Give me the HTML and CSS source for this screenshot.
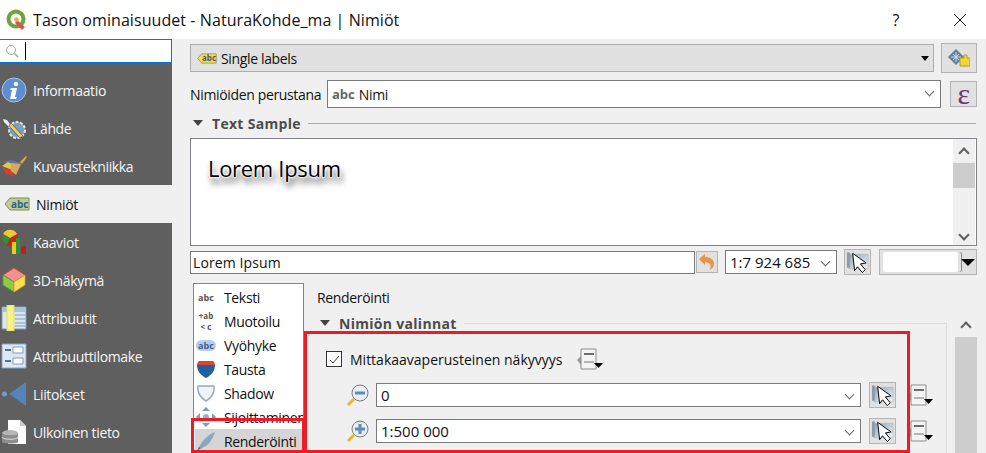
FILE: index.html
```html
<!DOCTYPE html>
<html lang="en">

<head>
    <meta charset="UTF-8">
    <title>Tason ominaisuudet</title>
    <link rel="stylesheet" href="styles.css">
</head>

<body>
    <svg class="defs" width="0" height="0">
        <defs>
            <linearGradient id="mapfill" x1="0" y1="0" x2="1" y2="1">
                <stop offset="0" stop-color="#8fa3b5"/>
                <stop offset="1" stop-color="#f2f5f7"/>
            </linearGradient>
        </defs>
        <symbol id="pick" viewBox="0 0 26 26">
            <path d="M4 5h20v15H4z" fill="url(#mapfill)" stroke="#a5afb7" stroke-width=".6"/>
            <path d="M2 3h3v16H2z" fill="#8f9ba6"/>
            <path d="M8 4l14 10-6 1 5 6-3 3-5-6-3 4z" fill="#fff" stroke="#000"/>
        </symbol>
        <symbol id="dd" viewBox="0 0 28 24">
            <path d="M1 13l4-4v9z" fill="#9a9a9a"/>
            <path d="M5 2h15v20H5z" fill="#f4f4f4" stroke="#8c8c8c"/>
            <path d="M8 6h10v2H8z" fill="#6d6d6d"/>
            <path d="M8 14h10v2H8z" fill="#b5b5b5"/>
            <path d="M18 16h9l-4.500 5z" fill="#000"/>
        </symbol>
        <symbol id="abc" viewBox="0 0 26 14">
            <path d="M6 1h19v12H6L1 7z" fill="currentColor" stroke="#8a8a4a"/>
        </symbol>
    </svg>

    <div class="titlebar">
        <svg class="qgis" width="21" height="21" viewBox="0 0 21 21">
            <circle cx="10" cy="10" r="7.500" fill="none" stroke="#6ea33d" stroke-width="4"/>
            <path d="M11 11l8 7-3 3-7-7z" fill="#d9534f"/>
            <circle cx="10.500" cy="10.500" r="2.300" fill="#e8b23a"/>
        </svg>
        <span class="title">Tason ominaisuudet - NaturaKohde_ma | Nimiöt</span>
        <span class="help">?</span>
        <svg class="close" width="14" height="14" viewBox="0 0 14 14">
            <path d="M1 1l12 12M13 1L1 13" stroke="#111" fill="none"/>
        </svg>
    </div>

    <div class="dialog">
        <div class="sidebar">
            <div class="search">
                <svg width="14" height="14" viewBox="0 0 14 14">
                    <circle cx="6" cy="6" r="4.500" fill="none" stroke="#a5a5a5"/>
                    <path d="M9.500 9.500l3.500 3.500" stroke="#a5a5a5" stroke-width="1.500"/>
                </svg>
                <span class="caret"></span>
            </div>
            <ul class="menu">
                <li>
                    <svg width="26" height="26" viewBox="0 0 26 26">
                        <circle cx="13" cy="13" r="12" fill="#5c8fd0" stroke="#a9c4e6"/>
                        <circle cx="15" cy="7" r="2.300" fill="#fff"/>
                        <path d="M10 11h6l-2 9h2l-1 2H9l2-9H9z" fill="#fff"/>
                    </svg>
                    Informaatio
                </li>
                <li>
                    <svg width="26" height="26" viewBox="0 0 26 26">
                        <circle cx="16" cy="15" r="8" fill="#7f9fb8" stroke="#e6e6e6" stroke-width="2" stroke-dasharray="3 1.500"/>
                        <path d="M2 4l4 1 3 4 3 2-2 2-3-2-4-4z" fill="#eee"/>
                        <path d="M10 8l12 13-3 2L8 11z" fill="#e8cf73" stroke="#333" stroke-width=".6"/>
                    </svg>
                    Lähde
                </li>
                <li>
                    <svg width="26" height="26" viewBox="0 0 26 26">
                        <path d="M19 9l6-6 1 1-5 7z" fill="#e0a93f"/>
                        <path d="M2 9l8-2 10 3-4 7z" fill="#5577b0"/>
                        <path d="M1 13l6-4 6 3-2 5z" fill="#e6c53f"/>
                        <path d="M1 14l9 3 3 7-8-3z" fill="#d2402f"/>
                        <path d="M10 10l10 1-5 11-5-4z" fill="#d9a860"/>
                    </svg>
                    Kuvaustekniikka
                </li>
                <li class="active">
                    <span class="abc-tag">
                        <svg width="26" height="14"><use href="#abc"/></svg>
                        <b>abc</b>
                    </span>
                    Nimiöt
                </li>
                <li>
                    <svg width="26" height="26" viewBox="0 0 26 26">
                        <circle cx="9" cy="9" r="8" fill="#c0281c"/>
                        <path d="M2 5a8 8 0 0 1 14 0L9 9z" fill="#e9c93a"/>
                        <path d="M1 9a8 8 0 0 0 5 7l3-7-7-4z" fill="#2f8f3a"/>
                        <path d="M11 13h4v12h-4z" fill="#f2c81e"/>
                        <path d="M15 9h4v16h-4z" fill="#2f8f3a"/>
                        <path d="M20 17h5v8h-5z" fill="#b3261a"/>
                    </svg>
                    Kaaviot
                </li>
                <li>
                    <svg width="26" height="26" viewBox="0 0 26 26">
                        <path d="M13 1l11 7-11 7L2 8z" fill="#f48f8f" stroke="#c43" stroke-width=".8"/>
                        <path d="M2 8l11 7v10L2 18z" fill="#8ccb45" stroke="#5c9a2a" stroke-width=".8"/>
                        <path d="M24 8l-11 7v10l11-7z" fill="#f6df59" stroke="#c9a92e" stroke-width=".8"/>
                    </svg>
                    3D-näkymä
                </li>
                <li>
                    <svg width="26" height="26" viewBox="0 0 26 26">
                        <path d="M1 2h24v22H1z" fill="#dbe6f2" stroke="#7b9cc2"/>
                        <path d="M2 3h23v4H2z" fill="#a9c3df"/>
                        <path d="M14 10h10M14 14h10M14 18h10M14 21h10" stroke="#7f9dc0"/>
                        <path d="M6 0h7v26H6z" fill="#f6f28a" stroke="#e9e04a"/>
                    </svg>
                    Attribuutit
                </li>
                <li>
                    <svg width="26" height="26" viewBox="0 0 26 26">
                        <path d="M1 1h24v24H1z" fill="#dfe8f2" stroke="#86a4c6"/>
                        <path d="M12 4h10v6H12zM12 15h10v6H12z" fill="#fff" stroke="#7b9cc2"/>
                        <path d="M4 7h6M4 18h6" stroke="#52708f" stroke-width="2"/>
                    </svg>
                    Attribuuttilomake
                </li>
                <li>
                    <svg width="26" height="26" viewBox="0 0 26 26">
                        <circle cx="3.500" cy="13" r="2.500" fill="#6f9dca"/>
                        <path d="M8 13L25 1v24z" fill="#5585b8"/>
                    </svg>
                    Liitokset
                </li>
                <li>
                    <svg width="26" height="26" viewBox="0 0 26 26">
                        <path d="M7 1h12l6 6v18H7z" fill="#fff"/>
                        <path d="M19 1v6h6z" fill="#c9c9c9"/>
                        <ellipse cx="9" cy="14" rx="8" ry="3" fill="#b5b5b5"/>
                        <path d="M1 14v9c0 2 16 2 16 0v-9c0 3-16 3-16 0z" fill="#8c8c8c"/>
                        <path d="M1 18c0 3 16 3 16 0" stroke="#ddd" fill="none"/>
                    </svg>
                    Ulkoinen tieto
                </li>
            </ul>
        </div>

        <div class="main">
            <div class="row-mode">
                <div class="mode-select">
                    <span class="abc-tag yellow">
                        <svg width="20" height="11" viewBox="0 0 26 14"><use href="#abc"/></svg>
                        <b>abc</b>
                    </span>
                    Single labels
                    <span class="arrow"></span>
                </div>
                <div class="tool-btn mode-btn">
                    <svg width="22" height="18" viewBox="0 0 22 18">
                        <path d="M8 0l8 8-8 8-8-8z" fill="#5d7f98"/>
                        <path d="M8 3v10M3 8h10M5 5l6 6M11 5l-6 6" stroke="#cfdde6"/>
                        <path d="M12 9h4V6h3v3h3v8H12z" fill="#f1d53a" stroke="#b89d1a"/>
                    </svg>
                </div>
            </div>

            <div class="row-field">
                <label>Nimiöiden perustana</label>
                <div class="combo field-combo"><b class="abc-gray">abc</b> Nimi<span class="chev"></span></div>
                <div class="tool-btn eps">ε</div>
            </div>

            <div class="group-head text-sample">
                <span class="tri"></span><b>Text Sample</b><span class="rule"></span>
            </div>

            <div class="preview">
                <div class="lorem">Lorem Ipsum</div>
                <div class="scroll preview-scroll"><span class="up"></span><span class="thumb"></span><span class="down"></span></div>
            </div>

            <div class="row-sample">
                <div class="sample-input">Lorem Ipsum</div>
                <div class="tool-btn undo">
                    <svg width="18" height="18" viewBox="0 0 18 18">
                        <path d="M1 6l6-5v3c6 0 9 3 9 7 0 3-2 5-5 6 2-2 2-4 1-6-1-1-3-2-5-2v3z" fill="#e8924a"/>
                    </svg>
                </div>
                <div class="combo scale-combo">1:7 924 685<span class="chev"></span></div>
                <div class="tool-btn pick-btn"><svg width="26" height="26"><use href="#pick"/></svg></div>
                <div class="color-btn"><span class="swatch"></span><span class="arrow big"></span></div>
            </div>

            <div class="lower">
                <ul class="tabs">
                    <li><span class="tab-icon small-abc">abc</span>Teksti</li>
                    <li><span class="tab-icon small-fmt">+ab<br>&lt; c</span>Muotoilu</li>
                    <li><span class="tab-icon small-buf">abc</span>Vyöhyke</li>
                    <li>
                        <svg class="tab-icon" width="20" height="18" viewBox="0 0 20 18">
                            <path d="M1 5c0-2 1-3 2-4h14c1 1 2 2 2 4z" fill="#d9443a"/>
                            <path d="M1 5h18c0 7-5 11-9 13C6 16 1 12 1 5z" fill="#1f5f9c"/>
                        </svg>Tausta
                    </li>
                    <li>
                        <svg class="tab-icon" width="20" height="18" viewBox="0 0 20 18">
                            <path d="M2 2h16c1 8-4 13-8 15C6 15 1 10 2 2z" fill="#eef2fb" stroke="#9aa7c4" stroke-width="1.500"/>
                        </svg>Shadow
                    </li>
                    <li>
                        <svg class="tab-icon" width="20" height="20" viewBox="0 0 20 20">
                            <path d="M10 0l4 4h-8zM10 20l-4-4h8zM0 10l4-4v8zM20 10l-4 4V6z" fill="#7f9cb8"/>
                            <circle cx="10" cy="10" r="3" fill="#9ab2c8"/>
                        </svg>Sijoittaminen
                    </li>
                    <li class="selected">
                        <svg class="tab-icon" width="20" height="20" viewBox="0 0 20 20">
                            <path d="M2 19C4 12 11 4 19 1c-2 7-7 14-13 16z" fill="#8ba7bd"/>
                            <path d="M1 20l4-3-2-1z" fill="#52687a"/>
                        </svg>Renderöinti
                    </li>
                </ul>

                <div class="panel">
                    <div class="panel-title">Renderöinti</div>
                    <div class="group-head options-head">
                        <span class="tri"></span><b>Nimiön valinnat</b><span class="rule"></span>
                    </div>
                    <div class="options">
                        <div class="check-row">
                            <span class="check">
                                <svg width="11" height="9" viewBox="0 0 11 9"><path d="M1 5l3 3 6-7" fill="none" stroke="#333"/></svg>
                            </span>
                            Mittakaavaperusteinen näkyvyys
                            <svg class="dd-icon" width="28" height="24"><use href="#dd"/></svg>
                        </div>
                        <div class="scale-row">
                            <svg class="zoom" width="24" height="24" viewBox="0 0 24 24">
                                <circle cx="14" cy="10" r="8" fill="#e8edf3" stroke="#7d7d7d"/>
                                <path d="M9 10h10" stroke="#5d8cbc" stroke-width="3"/>
                                <path d="M8 16l-6 6" stroke="#e8b92e" stroke-width="3"/>
                            </svg>
                            <div class="combo scale-field">0<span class="chev"></span></div>
                            <div class="tool-btn pick-btn"><svg width="26" height="26"><use href="#pick"/></svg></div>
                            <svg class="dd-icon" width="28" height="24"><use href="#dd"/></svg>
                        </div>
                        <div class="scale-row">
                            <svg class="zoom" width="24" height="24" viewBox="0 0 24 24">
                                <circle cx="14" cy="10" r="8" fill="#e8edf3" stroke="#7d7d7d"/>
                                <path d="M9 10h10M14 5v10" stroke="#5d8cbc" stroke-width="3"/>
                                <path d="M8 16l-6 6" stroke="#e8b92e" stroke-width="3"/>
                            </svg>
                            <div class="combo scale-field">1:500 000<span class="chev"></span></div>
                            <div class="tool-btn pick-btn"><svg width="26" height="26"><use href="#pick"/></svg></div>
                            <svg class="dd-icon" width="28" height="24"><use href="#dd"/></svg>
                        </div>
                    </div>
                    <div class="scroll panel-scroll"><span class="up"></span><span class="thumb"></span></div>
                </div>
            </div>
        </div>
    </div>

    <div class="red-box red-options"></div>
    <div class="red-box red-tab"></div>
</body>

</html>
```

FILE: styles.css
```css
body {
    margin: 0;
    width: 986px;
    height: 453px;
    overflow: hidden;
    position: relative;
    background-color: #f0f0f0;
    font-family: "Open Sans", "Noto Sans", sans-serif;
    font-size: 14px;
    letter-spacing: -0.35px;
    color: #111;
}

ul {
    margin: 0;
    padding: 0;
    list-style: none;
}

.defs {
    position: absolute;
}

.titlebar {
    height: 39px;
    background-color: #fff;
    display: flex;
    align-items: center;
    padding-left: 6px;
}

.qgis {
    margin-right: 6px;
}

.title {
    font-size: 16px;
    letter-spacing: 0.07px;
}

.help {
    margin-left: auto;
    margin-right: 54px;
    font-size: 16px;
}

.close {
    margin-right: 19px;
}

.dialog {
    display: flex;
    height: 414px;
}

.sidebar {
    width: 172px;
    flex: none;
}

.search {
    height: 24px;
    box-sizing: border-box;
    border: 1px solid #0078d7;
    border-left: none;
    background-color: #fff;
    display: flex;
    align-items: center;
    padding-left: 5px;
}

.caret {
    width: 1px;
    height: 18px;
    background-color: #000;
    margin-left: 6px;
}

.menu {
    background-color: #5f5f5f;
    padding-top: 8px;
    height: 382px;
}

.menu li {
    height: 38px;
    display: flex;
    align-items: center;
    gap: 6px;
    padding-left: 1px;
    color: #f5f5f5;
}

.menu li.active {
    background-color: #f0f0f0;
    color: #111;
    padding-left: 4px;
}

.abc-tag {
    position: relative;
    display: inline-flex;
    color: #b9cf95;
}

.abc-tag b {
    position: absolute;
    left: 7px;
    top: 0;
    font-size: 10px;
    line-height: 14px;
    letter-spacing: 0;
    color: #2f5f86;
}

.abc-tag.yellow {
    color: #f4dc60;
}

.abc-tag.yellow b {
    left: 5px;
    top: -2px;
    font-size: 8px;
    color: #555;
}

.main {
    flex: 1;
    padding: 4px 9px 0 18px;
    min-width: 0;
}

.row-mode {
    display: flex;
    align-items: center;
    gap: 7px;
    height: 30px;
}

.mode-select {
    flex: 1;
    height: 28px;
    box-sizing: border-box;
    border: 1px solid #adadad;
    background-color: #e1e1e1;
    display: flex;
    align-items: center;
    gap: 4px;
    padding-left: 6px;
}

.arrow {
    margin-left: auto;
    margin-right: 4px;
    border: 4px solid transparent;
    border-top: 5px solid #000;
    border-bottom: none;
}

.tool-btn {
    box-sizing: border-box;
    border: 1px solid #b4b4b4;
    background-color: #e1e1e1;
    display: flex;
    align-items: center;
    justify-content: center;
    flex: none;
}

.mode-btn {
    width: 36px;
    height: 30px;
}

.row-field {
    display: flex;
    align-items: center;
    height: 28px;
    margin-top: 7px;
}

.row-field label {
    width: 137px;
    flex: none;
}

.combo {
    box-sizing: border-box;
    border: 1px solid #7a7a7a;
    background-color: #fff;
    display: flex;
    align-items: center;
    position: relative;
}

.chev {
    position: absolute;
    right: 7px;
    top: 7px;
    width: 6px;
    height: 6px;
    border-right: 1px solid #666;
    border-bottom: 1px solid #666;
    transform: rotate(45deg);
}

.field-combo {
    width: 614px;
    height: 28px;
    padding-left: 4px;
    gap: 4px;
}

.abc-gray {
    color: #666;
    font-size: 13px;
    letter-spacing: 0;
}

.eps {
    width: 27px;
    height: 26px;
    margin-left: 9px;
    color: #6a3a70;
    font-size: 30px;
    line-height: 24px;
    font-family: "Liberation Serif", serif;
}

.group-head {
    display: flex;
    align-items: center;
    height: 20px;
}

.text-sample {
    margin-top: 5px;
}

.tri {
    width: 0;
    border: 5px solid transparent;
    border-top: 6px solid #444;
    border-bottom: none;
    margin: 0 9px 0 3px;
}

.group-head b {
    color: #4c4c4c;
    letter-spacing: 0.3px;
}

.rule {
    flex: 1;
    height: 1px;
    background-color: #aaa;
    margin-left: 7px;
    margin-right: 1px;
}

.preview {
    height: 108px;
    margin-top: 5px;
    box-sizing: border-box;
    border: 1px solid #82828c;
    background-color: #fff;
    display: flex;
    justify-content: space-between;
}

.lorem {
    font-size: 22px;
    letter-spacing: -0.3px;
    color: #000;
    margin: 14px 0 0 17px;
    height: 30px;
    text-shadow: 0 0 2px #fff, 0 0 2px #fff, 0 0 2px #fff, 0 0 3px #fff, 2px 6px 6px #333;
}

.scroll {
    width: 22px;
    background-color: #f0f0f0;
    display: flex;
    flex-direction: column;
    align-items: center;
    flex: none;
    box-sizing: border-box;
}

.up,
.down {
    width: 6px;
    height: 6px;
    border-left: 2px solid #606060;
    border-top: 2px solid #606060;
    transform: rotate(45deg);
    margin: 10px 0 2px;
    flex: none;
}

.down {
    transform: rotate(225deg);
    margin: auto 0 6px;
}

.thumb {
    width: 100%;
    height: 25px;
    background-color: #cdcdcd;
    margin-top: 4px;
    flex: none;
}

.preview-scroll {
    margin-right: 1px;
}

.row-sample {
    display: flex;
    align-items: center;
    height: 26px;
    margin-top: 3px;
}

.sample-input {
    box-sizing: border-box;
    width: 505px;
    height: 23px;
    border: 1px solid #7a7a7a;
    background-color: #fff;
    padding-left: 2px;
    line-height: 21px;
    letter-spacing: 0.1px;
}

.undo {
    width: 22px;
    height: 22px;
    margin-left: 1px;
}

.scale-combo {
    width: 112px;
    height: 24px;
    margin-left: 7px;
    padding-left: 4px;
    font-size: 15px;
    letter-spacing: 0;
}

.pick-btn {
    width: 27px;
    height: 26px;
}

.row-sample .pick-btn {
    margin-left: 7px;
}

.color-btn {
    box-sizing: border-box;
    width: 98px;
    height: 26px;
    margin-left: 8px;
    border: 1px solid #b4b4b4;
    background-color: #e1e1e1;
    display: flex;
    align-items: center;
    padding-left: 3px;
}

.swatch {
    width: 75px;
    height: 20px;
    background-color: #fff;
    border-radius: 2px;
    box-shadow: 3px 0 0 #e1e1e1, 4px 0 0 #8a8a8a;
}

.arrow.big {
    border-width: 7px 7px 0;
    border-top-color: #000;
    margin-right: 1px;
}

.lower {
    display: flex;
    margin-top: 8px;
    padding-left: 3px;
    height: 170px;
}

.tabs {
    width: 111px;
    height: 170px;
    flex: none;
    box-sizing: border-box;
    border: 1px solid #82828c;
    background-color: #fff;
    padding: 1px 1px 0;
    overflow: hidden;
}

.tabs li {
    height: 24px;
    display: flex;
    align-items: center;
    white-space: nowrap;
}

.tabs li.selected {
    background-color: #d5d5d5;
}

.tab-icon {
    width: 20px;
    margin: 0 8px 0 1px;
    flex: none;
    font-size: 9px;
    font-weight: 700;
    letter-spacing: 0;
    color: #555;
    text-align: center;
}

.small-fmt {
    font-size: 8px;
    line-height: 11px;
}

.small-buf {
    background-color: #b9cdf0;
    border-radius: 6px;
    color: #3f5f8f;
    line-height: 11px;
}

.panel {
    flex: 1;
    position: relative;
    padding-left: 13px;
    min-width: 0;
}

.panel-title {
    height: 20px;
    line-height: 20px;
    margin-top: 5px;
}

.options-head {
    margin-top: 6px;
    margin-right: 30px;
    height: 18px;
}

.options-head .rule {
    background-color: #ddd;
}

.options {
    margin-top: -9px;
    margin-left: -9px;
    margin-right: 30px;
    box-sizing: border-box;
    border-right: 1px solid #ddd;
    height: 130px;
    padding-left: 18px;
}

.check-row {
    display: flex;
    align-items: center;
    height: 24px;
    padding-top: 24px;
    letter-spacing: 0;
}

.check {
    box-sizing: border-box;
    width: 16px;
    height: 16px;
    margin-right: 8px;
    border: 1px solid #333;
    background-color: #fff;
    display: flex;
    align-items: center;
    justify-content: center;
}

.check-row .dd-icon {
    margin-left: 14px;
}

.scale-row {
    display: flex;
    align-items: center;
    height: 26px;
    margin-top: 10px;
}

.scale-row:nth-child(2) {
    margin-top: 11px;
}

.zoom {
    width: 24px;
    flex: none;
    margin-left: 20px;
    margin-right: 6px;
}

.scale-field {
    width: 485px;
    height: 24px;
    padding-left: 4px;
    margin-right: 8px;
    font-size: 15px;
    letter-spacing: 0;
}

.scale-row .dd-icon {
    margin-left: 10px;
    flex: none;
}

.panel-scroll {
    position: absolute;
    right: 0;
    top: 30px;
    height: 140px;
}

.panel-scroll .thumb {
    background-color: #cdcdcd;
    height: 116px;
}

.red-box {
    position: absolute;
    box-sizing: border-box;
    border: 3px solid #ed1c24;
}

.red-options {
    left: 304px;
    top: 331px;
    width: 606px;
    height: 122px;
}

.red-tab {
    left: 191px;
    top: 418px;
    width: 114px;
    height: 35px;
}
```
